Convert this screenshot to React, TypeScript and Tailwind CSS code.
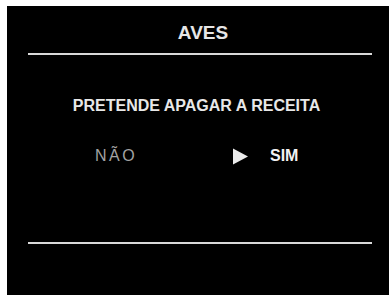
export default function App() {
  return (
    <div className="w-[389px] h-[295px] bg-white overflow-hidden">
      <div
        className="ml-[7px] mt-[6px] h-[289px] bg-black pl-[21px] pr-[17px] pt-[16px] flex flex-col"
        style={{ fontFamily: '"Liberation Sans", Arial, sans-serif' }}
      >
        {/* header */}
        <div className="text-center text-[19px] leading-[22px] font-bold text-[#e6e6e6] pl-[6px]">
          AVES
        </div>
        <div className="mt-[9px] h-[2px] bg-[#d9d9d9]" />

        {/* question */}
        <div className="mt-[41px] text-center text-[16px] leading-[20px] font-bold text-[#e8e8e8] pr-[7px]">
          PRETENDE APAGAR A RECEITA
        </div>

        {/* options */}
        <div className="mt-[30px] flex items-center pl-[67px] text-[16px] leading-[20px]">
          <span className="w-[137px] text-[#a3a3a3] tracking-[0.16em]">NÃO</span>
          <svg width="17" height="17" viewBox="0 0 17 17" className="shrink-0">
            <polygon points="1,0.5 16,8.5 1,16.5" fill="#ececec" />
          </svg>
          <span className="ml-[21px] font-bold text-[#f2f2f2]">SIM</span>
        </div>

        <div className="mt-[76px] h-[2px] bg-[#d9d9d9]" />
      </div>
    </div>
  );
}
